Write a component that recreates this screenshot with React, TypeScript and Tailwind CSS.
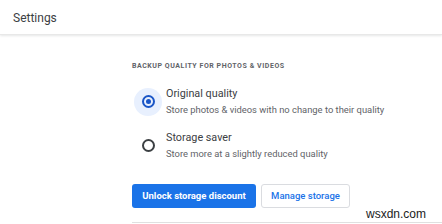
export default function App() {
    return (
        <div className="relative w-[442px] h-[224px] overflow-hidden bg-white font-['Roboto',sans-serif]">
            {/* Header */}
            <header className="h-[35px] px-[13px] flex items-center border-b border-[#e8e8e8] shadow-[0_1px_2px_rgba(60,64,67,0.12)]">
                <h1 className="text-[12px] text-[#3c4043] leading-none pt-[1px]">Settings</h1>
            </header>

            {/* Content */}
            <div className="pl-[132px] pt-[26px]">
                <p className="text-[7px] font-bold tracking-[0.55px] leading-[10px] text-[#5f6368] uppercase">
                    Backup quality for photos &amp; videos
                </p>

                <div className="mt-[15px] flex flex-col gap-[13px]">
                    {/* Original quality (selected) */}
                    <div className="flex items-center gap-[4px] pl-[2px]">
                        <div className="w-[28px] h-[28px] rounded-full bg-[#e8f0fe] flex items-center justify-center">
                            <div className="w-[13px] h-[13px] rounded-full border-[2px] border-[#1a56c7] flex items-center justify-center">
                                <div className="w-[5px] h-[5px] rounded-full bg-[#1a56c7]"></div>
                            </div>
                        </div>
                        <div>
                            <p className="text-[10.8px] leading-[16px] text-[#3c4043]">Original quality</p>
                            <p className="text-[9.4px] leading-[15px] text-[#5f6368]">Store photos &amp; videos with no change to their quality</p>
                        </div>
                    </div>

                    {/* Storage saver */}
                    <div className="flex items-center gap-[4px] pl-[2px]">
                        <div className="w-[28px] h-[28px] flex items-center justify-center">
                            <div className="w-[13px] h-[13px] rounded-full border-[2px] border-[#3c4043]"></div>
                        </div>
                        <div>
                            <p className="text-[10.8px] leading-[16px] text-[#3c4043]">Storage saver</p>
                            <p className="text-[9.4px] leading-[15px] text-[#5f6368]">Store more at a slightly reduced quality</p>
                        </div>
                    </div>
                </div>

                {/* Buttons */}
                <div className="mt-[23px] flex gap-[5px]">
                    <button className="h-[24px] w-[124px] rounded-[3px] bg-[#1a73e8] text-white text-[9.5px] font-bold">
                        Unlock storage discount
                    </button>
                    <button className="h-[24px] w-[89px] rounded-[3px] border border-[#dadce0] bg-white text-[#1a73e8] text-[9.5px] font-medium">
                        Manage storage
                    </button>
                </div>

                <div className="mt-[14px] border-t border-[#e0e0e0]"></div>
            </div>

            {/* Watermark */}
            <span className="absolute left-[366px] top-[205px] text-[12px] text-[#222] font-['Liberation_Sans',sans-serif]">
                wsxdn.com
            </span>
        </div>
    );
}
